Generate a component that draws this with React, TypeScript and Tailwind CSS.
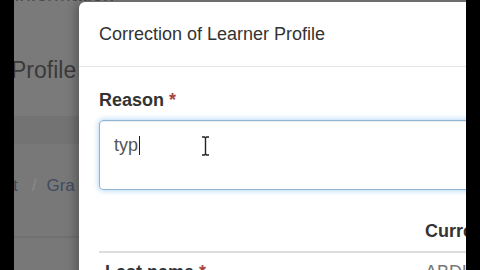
import React from "react";

const font = { fontFamily: '"Liberation Sans", Arial, sans-serif' };

export default function App() {
  return (
    <div className="flex h-[270px] w-[480px] overflow-hidden bg-black" style={font}>
      <div className="w-[14px] shrink-0 bg-black" />
      <div className="relative flex-1 overflow-hidden bg-[#7a7a7a]">
        {/* dimmed page behind */}
        <div className="flex flex-col">
          <div className="h-[3px] overflow-hidden">
            <div className="-mt-[16px] whitespace-nowrap text-[20px] leading-[20px] text-[#4a4a4a]">Information</div>
          </div>
          <div className="flex h-[113px] items-start pt-[54px]">
            <span className="-ml-[3px] whitespace-nowrap text-[23px] leading-[26px] text-[#3a3a3a]">Profile</span>
          </div>
          <div className="h-[28px] bg-[#737373]" />
          <div className="flex h-[92px] items-start bg-[#787878] pt-[32px]">
            <span className="-ml-[1px] whitespace-nowrap text-[17px] leading-[20px]">
              <span className="text-[#404b60]">t</span>
              <span className="ml-[14px] mr-[10px] text-[#8a8a8a]">/</span>
              <span className="text-[#404b60]">Gra</span>
            </span>
          </div>
          <div className="h-[2px] bg-[#707070]" />
          <div className="h-[40px] bg-[#787878]" />
        </div>

        {/* modal */}
        <div className="absolute left-[65px] top-[2px] w-[440px] rounded-t-[6px] bg-white shadow-[-4px_0_10px_rgba(0,0,0,0.25)]">
          <div className="flex h-[65px] items-center border-b border-[#e5e5e5] px-[20px]">
            <span className="text-[18px] leading-[22px] text-[#333]">Correction of Learner Profile</span>
          </div>
          <div className="px-[20px] pt-[21px]">
            <div className="mb-[7px] text-[18px] font-bold leading-[25px] text-[#333]">
              Reason <span className="text-[#a94442]">*</span>
            </div>
            <div className="relative flex h-[70px] w-[420px] items-start rounded-[4px] border border-[#8fb4d6] px-[14px] pt-[12px] shadow-[0_0_6px_rgba(102,175,233,0.6),inset_0_1px_1px_rgba(0,0,0,0.075)]">
              <span className="text-[18px] leading-[24px] text-[#555]">typ</span>
              <span className="ml-[1px] mt-[3px] h-[19px] w-[1px] bg-[#222]" />
              <svg className="absolute left-[101px] top-[15px]" width="9" height="20" viewBox="0 0 9 20">
                <path d="M1 1h2.5l1 1 1-1H8M4.5 2v16M1 19h2.5l1-1 1 1H8" fill="none" stroke="#222" strokeWidth="1.4" />
              </svg>
            </div>
            <div className="flex h-[63px] items-end justify-end border-b-2 border-[#dddddd] pb-[9px]">
              <span className="w-[74px] text-[18px] font-bold leading-[22px] text-[#333]">Current</span>
            </div>
            <div className="flex justify-between pl-[6px] pt-[8px]">
              <span className="text-[18px] font-bold leading-[22px] text-[#333]">
                Last name <span className="text-[#a94442]">*</span>
              </span>
              <span className="w-[74px] text-[18px] leading-[22px] text-[#777]">ABDUL</span>
            </div>
          </div>
        </div>
      </div>
      <div className="w-[14px] shrink-0 bg-black" />
    </div>
  );
}
